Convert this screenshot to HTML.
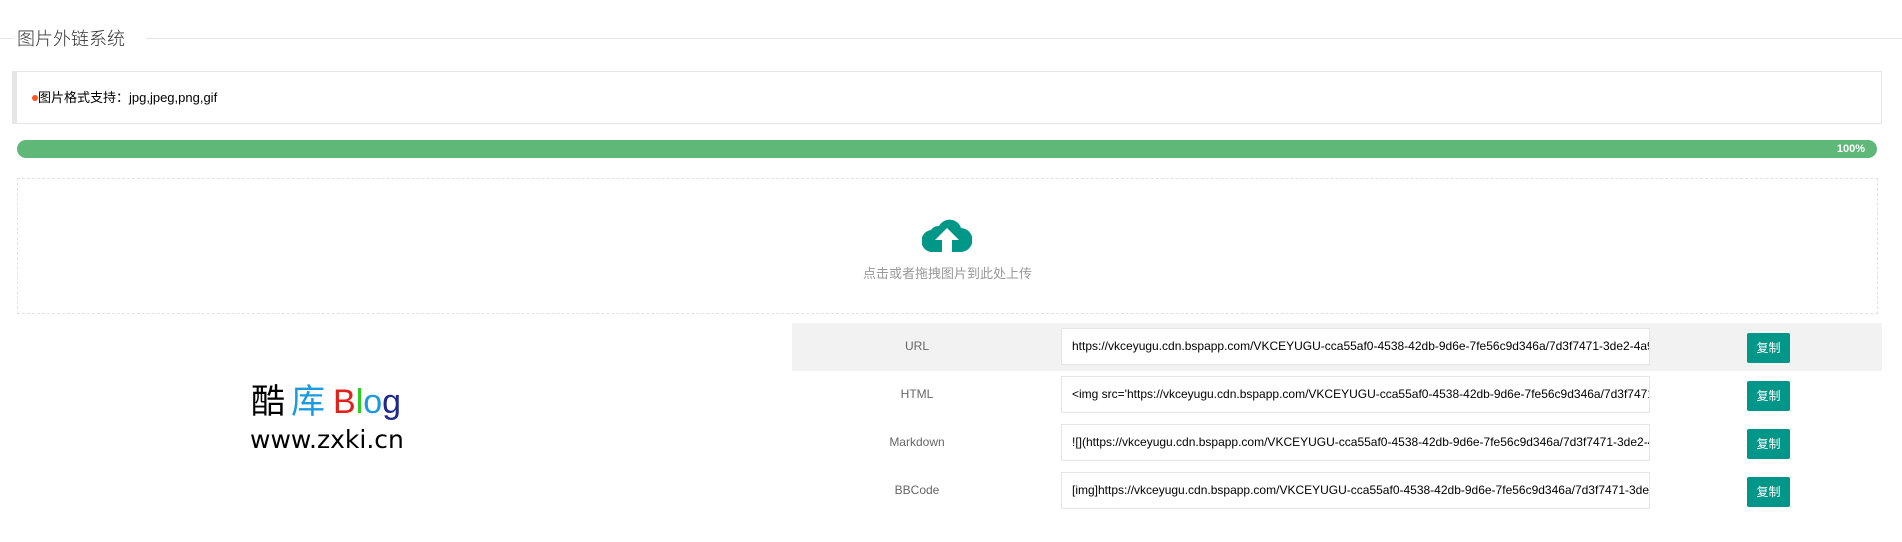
<!DOCTYPE html>
<html><head><meta charset="utf-8"><style>
*{margin:0;padding:0;box-sizing:border-box}
body{width:1902px;height:542px;background:#fff;font-family:"Liberation Sans","Noto Sans CJK SC",sans-serif;position:relative;overflow:hidden;color:#333}
.abs{position:absolute}
.line{position:absolute;top:38px;height:1px;background:#e6e6e6}
.title{left:17px;top:28px;font-size:18px;color:#333;line-height:22px;font-weight:300}
.tip{left:12px;top:71px;width:1870px;height:53px;border:1px solid #e6e6e6;border-left:5px solid #e6e6e6}
.tip span{position:absolute;left:15px;top:16px;font-size:13px;color:#000;line-height:20px}
.dot{display:inline-block;width:6px;height:6px;border-radius:50%;background:#ff5722;vertical-align:1px}
.bar{left:17px;top:140px;width:1860px;height:18px;border-radius:9px;background:#5fb878;color:#fff;font-size:11px;font-weight:bold;text-align:right;padding-right:12px;line-height:18px}
.drop{left:17px;top:178px;width:1861px;height:136px;border:1px dashed #e2e2e2}
.dt{left:17px;width:1861px;top:263px;text-align:center;font-size:13px;color:#999}
.row{left:792px;width:1090px;height:48px}
.lab{position:absolute;left:0;width:250px;text-align:center;top:16px;font-size:12px;color:#666}
.inp{position:absolute;left:269px;width:589px;top:5px;height:37px;border:1px solid #e6e6e6;background:#fff;font-size:12px;color:#000;line-height:35px;padding-left:10px;white-space:nowrap;overflow:hidden}
.btn{position:absolute;left:955px;top:10px;width:43px;height:30px;background:#009688;color:#fff;font-size:12px;text-align:center;line-height:30px;border-radius:2px}
</style></head><body>
<div class="line" style="left:0;width:15px"></div>
<div class="line" style="left:146px;width:1756px"></div>
<div class="abs title">图片外链系统</div>
<div class="abs tip"><span><i class="dot"></i>图片格式支持：jpg,jpeg,png,gif</span></div>
<div class="abs bar">100%</div>
<div class="abs drop"></div>
<svg class="abs" style="left:922px;top:216px" width="50" height="36" viewBox="0 0 50 36">
<path fill="#009688" d="M12 36 A11 11 0 0 1 9 14 A9 9 0 0 1 17 10 A12 12 0 0 1 39 12 A12 12 0 0 1 38 36 Z"/>
<path fill="#fff" d="M25 12 L37 24 L30 24 L30 36 L20 36 L20 24 L13 24 Z"/>
</svg>
<div class="abs dt">点击或者拖拽图片到此处上传</div>

<div class="abs row" style="top:323px;background:#f2f2f2"><div class="lab">URL</div><div class="inp">https://vkceyugu.cdn.bspapp.com/VKCEYUGU-cca55af0-4538-42db-9d6e-7fe56c9d346a/7d3f7471-3de2-4a9</div><div class="btn">复制</div></div>
<div class="abs row" style="top:371px"><div class="lab">HTML</div><div class="inp">&lt;img src='https://vkceyugu.cdn.bspapp.com/VKCEYUGU-cca55af0-4538-42db-9d6e-7fe56c9d346a/7d3f7471</div><div class="btn">复制</div></div>
<div class="abs row" style="top:419px"><div class="lab">Markdown</div><div class="inp">![](https://vkceyugu.cdn.bspapp.com/VKCEYUGU-cca55af0-4538-42db-9d6e-7fe56c9d346a/7d3f7471-3de2-4</div><div class="btn">复制</div></div>
<div class="abs row" style="top:467px"><div class="lab">BBCode</div><div class="inp">[img]https://vkceyugu.cdn.bspapp.com/VKCEYUGU-cca55af0-4538-42db-9d6e-7fe56c9d346a/7d3f7471-3de2</div><div class="btn">复制</div></div>

<div class="abs" style="left:251px;top:380px;font-size:34px;line-height:44px;white-space:nowrap;font-family:'Liberation Sans','Noto Sans CJK SC',sans-serif"><span style="color:#000">酷</span><span style="color:#1a9be0;margin-left:6px">库</span><span style="color:#e0231a;margin-left:8px">B</span><span style="color:#27d21b">l</span><span style="color:#1a9be0">o</span><span style="color:#1d2a8a">g</span></div>
<div class="abs" style="left:250px;top:426px;font-size:25px;line-height:28px;color:#000;font-family:'DejaVu Sans',sans-serif">www.zxki.cn</div>
</body></html>
